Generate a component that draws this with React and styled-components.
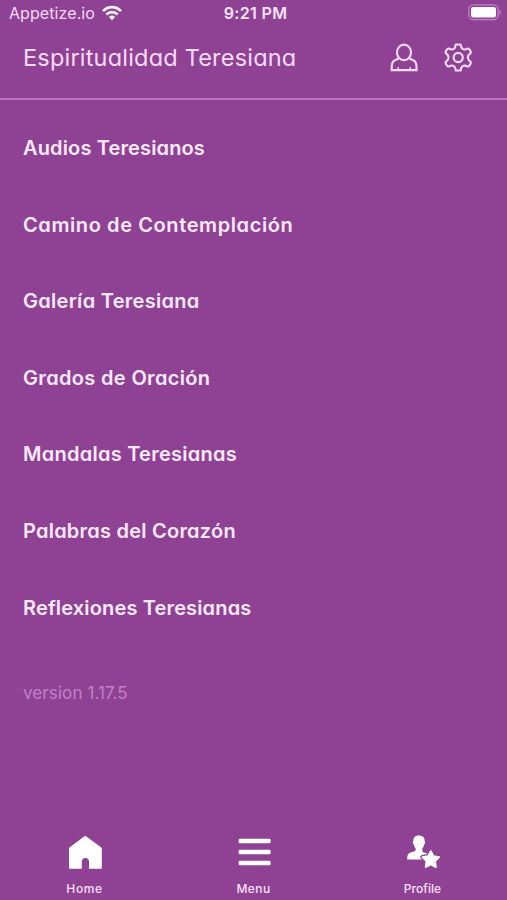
import React from 'react';
import styled, { createGlobalStyle } from 'styled-components';

const GlobalStyle = createGlobalStyle`
	* {
		box-sizing: border-box;
	}

	body {
		margin: 0;
		background: #8f4293;
		font-family: Inter, 'Open Sans', sans-serif;
		font-feature-settings: 'cv11';
	}
`;

const Screen = styled.div`
	display: flex;
	flex-direction: column;
	height: 900px;
	background: #8f4293;
	color: #fde9ff;
	white-space: nowrap;
	overflow: hidden;
`;

const StatusBar = styled.div`
	display: grid;
	grid-template-columns: 1fr auto 1fr;
	align-items: center;
	height: 26px;
	padding: 0 5px 0 9px;
`;

const Carrier = styled.div`
	display: flex;
	align-items: center;
	gap: 7px;
	font-size: 16px;
	line-height: 26px;
	letter-spacing: 0.08px;
	color: #f7d9f9;
`;

const Clock = styled.div`
	font-size: 16px;
	font-weight: 600;
	line-height: 26px;
	letter-spacing: 0.35px;
	color: #fbe3fc;
`;

const Battery = styled.svg`
	justify-self: end;
	margin-top: -1px;
`;

const Header = styled.header`
	display: flex;
	align-items: center;
	height: 74px;
	padding: 0 35px 8px 23px;
	border-bottom: 2px solid #bf70c3;
`;

const Title = styled.h1`
	flex: 1;
	margin: 0;
	font-size: 23.5px;
	font-weight: 400;
	line-height: 32px;
	letter-spacing: 0.2px;
	color: #fadcfc;
`;

const HeaderIcons = styled.div`
	display: flex;
	gap: 26px;
`;

const MenuList = styled.ul`
	margin: 0;
	padding: 10px 0 0 23px;
	list-style: none;
`;

const MenuItem = styled.li`
	height: 76.6px;
	font-size: 20px;
	font-weight: 600;
	line-height: 76.6px;
	letter-spacing: ${(props) => props.$spacing}px;
`;

const Version = styled.p`
	flex: 1;
	margin: 0;
	padding: 35px 0 0 23px;
	font-size: 17px;
	line-height: 24px;
	letter-spacing: 0.1px;
	color: #c181c7;
`;

const TabBar = styled.nav`
	display: grid;
	grid-template-columns: repeat(3, 1fr);
	height: 70px;
`;

const Tab = styled.div`
	display: flex;
	flex-direction: column;
	align-items: center;
	gap: 9px;
	padding-top: 4px;
	font-size: 12px;
	font-weight: 500;
	line-height: 16px;
	letter-spacing: ${(props) => props.$spacing}px;
	color: #fbe0fc;
`;

const WifiIcon = () => (
	<svg width="20" height="16" viewBox="0 0 20 16" fill="none" stroke="#fff4ff" strokeWidth="2.7">
		<path d="M1 6.1C6 .8 14 .8 19 6.1" />
		<path d="M4.4 9.5c3.2-3.2 8-3.2 11.2 0" />
		<path d="M6.9 12a4.5 4.5 0 0 1 6.2 0L10 15.2z" fill="#fff4ff" stroke="none" />
	</svg>
);

const BatteryIcon = () => (
	<Battery width="34" height="17" viewBox="0 0 34 17">
		<rect x=".8" y=".9" width="29.3" height="14.8" rx="4.5" fill="none" stroke="#c183c6" strokeWidth="1.3" />
		<rect x="3" y="3" width="25" height="10.6" rx="2.3" fill="#fff" />
		<path d="M31.5 5.9c2 .7 2 4.1 0 4.8z" fill="#c183c6" />
	</Battery>
);

const PersonIcon = () => (
	<svg width="28" height="30" viewBox="0 0 28 30" fill="none" stroke="#fbdcfd" strokeWidth="2.1">
		<ellipse cx="14" cy="9.4" rx="7" ry="7.8" />
		<path d="M8.9 15.6l-3.500 1.300c-2.800 1-3.700 3.700-3.700 7.100v3.100h24.800V24c0-3.400-.9-6.100-3.700-7.100l-3.600-1.300" />
		<path d="M8.200 24.200v2.400M20.200 24.200v2.400" strokeWidth="1.6" />
	</svg>
);

const GearIcon = () => (
	<svg width="28" height="30" viewBox="-14.2 -14.5 28 30" fill="none" stroke="#fbdcfd" strokeWidth="2.1" strokeLinejoin="round">
		<path d="M-2.400-13h4.800q.6 3 1.500 4 1.700 1.400 3.800.7l1.600-.7q1.200-.2 2 1l1.200 2.100q.4 1-.4 1.800Q9.700-2.400 9.600 0q.1 2.400 2.500 4.100.8.800.4 1.800l-1.200 2.100q-.8 1.200-2 1l-1.600-.7Q5.600 7.600 3.900 9 3 10 2.400 13h-4.800q-.6-3-1.500-4-1.700-1.400-3.800-.7l-1.600.7q-1.200.2-2-1l-1.200-2.100q-.4-1 .4-1.800Q-9.700 2.400-9.600 0q-.1-2.400-2.500-4.100-.8-.8-.4-1.800l1.200-2.100q.8-1.200 2-1l1.600.7q2.100.7 3.800-.7.9-1 1.500-4z" />
		<circle r="4.6" />
	</svg>
);

const HomeIcon = () => (
	<svg width="36" height="38" viewBox="0 0 36 38">
		<path
			d="M17.1 2.4q1.100-.8 2.200 0L34 13.200q.8.6.8 1.600v19.100q0 .8-.8.800H22v-7.200a3.600 3.600 0 0 0-7.200 0v7.200H2.800q-.8 0-.8-.8V14.800q0-1 .8-1.600z"
			fill="#fff"
		/>
	</svg>
);

const MenuIcon = () => (
	<svg width="36" height="38" viewBox="0 0 36 38" fill="#fff">
		<rect x="2.6" y="4.8" width="32" height="4.4" rx="1.3" />
		<rect x="2.6" y="15.8" width="32" height="4.4" rx="1.3" />
		<rect x="2.6" y="26.8" width="32" height="4.4" rx="1.3" />
	</svg>
);

const starPath = 'm25.8 17 2.700 5 5.700 1.100-4 4.200.8 5.900-5.200-2.600-5.200 2.600.8-5.900-4-4.200 5.700-1.100z';

const ProfileIcon = () => (
	<svg width="36" height="38" viewBox="0 0 36 38" fill="#fff" strokeLinejoin="round">
		<path d="M13.900 1.600c4.100 0 6 2.400 5.800 5.600.7.400.6 2.300-.5 3.300-.3 1.600-.9 2.900-1.900 3.900v2.600c.2 1.900 7 2 8.200 5.200v3.300H2.200c0-4.400.6-5.900 3.400-6.900 2.600-.9 4.900-1.200 5.100-2.600v-1.600c-1-1-1.600-2.300-1.900-3.900-1.100-1-1.200-2.900-.5-3.300-.2-3.200 1.500-5.600 5.600-5.600z" />
		<path d={starPath} fill="#8f4293" stroke="#8f4293" strokeWidth="4.2" />
		<path d={starPath} stroke="#fff" strokeWidth="1.6" />
	</svg>
);

const sections = [
	{ name: 'Audios Teresianos', spacing: 0.14 },
	{ name: 'Camino de Contemplación', spacing: 0.6 },
	{ name: 'Galería Teresiana', spacing: 0.29 },
	{ name: 'Grados de Oración', spacing: 0.34 },
	{ name: 'Mandalas Teresianas', spacing: 0.26 },
	{ name: 'Palabras del Corazón', spacing: 0.23 },
	{ name: 'Reflexiones Teresianas', spacing: 0.15 }
];

const tabs = [
	{ name: 'Home', icon: <HomeIcon />, spacing: 0.6 },
	{ name: 'Menu', icon: <MenuIcon />, spacing: 0.4 },
	{ name: 'Profile', icon: <ProfileIcon />, spacing: 0.05 }
];

const App = () => {
	return (
		<Screen>
			<GlobalStyle />
			<StatusBar>
				<Carrier>
					Appetize.io
					<WifiIcon />
				</Carrier>
				<Clock>9:21 PM</Clock>
				<BatteryIcon />
			</StatusBar>
			<Header>
				<Title>Espiritualidad Teresiana</Title>
				<HeaderIcons>
					<PersonIcon />
					<GearIcon />
				</HeaderIcons>
			</Header>
			<MenuList>
				{sections.map((section) => (
					<MenuItem key={section.name} $spacing={section.spacing}>
						{section.name}
					</MenuItem>
				))}
			</MenuList>
			<Version>version 1.17.5</Version>
			<TabBar>
				{tabs.map((tab) => (
					<Tab key={tab.name} $spacing={tab.spacing}>
						{tab.icon}
						{tab.name}
					</Tab>
				))}
			</TabBar>
		</Screen>
	);
};

export default App;
